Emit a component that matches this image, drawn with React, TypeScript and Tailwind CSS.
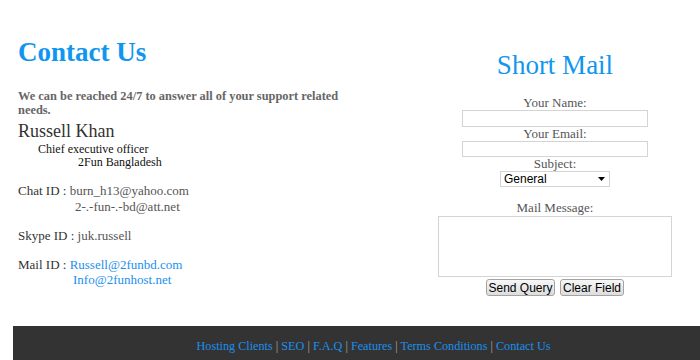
const serif = { fontFamily: '"Liberation Serif", "Times New Roman", serif' };
const sans = { fontFamily: '"Liberation Sans", Arial, sans-serif' };

const footerLinks = ['Hosting Clients', 'SEO', 'F.A.Q', 'Features', 'Terms Conditions', 'Contact Us'];

function ContactInfo() {
  return (
    <div className="w-[330px] shrink-0 pt-[36px]">
      <h1 className="text-[27px] font-bold leading-[32px] text-[#1196f0]">Contact Us</h1>
      <p className="mt-[21px] text-[12.4px] font-bold leading-[14px] text-[#666666]">
        We can be reached 24/7 to answer all of your support related needs.
      </p>
      <div className="mt-[4px] text-[18px] leading-[21px] text-[#333333]">Russell Khan</div>
      <div className="pl-[20px] text-[12px] leading-[14px] text-[#111111]">Chief executive officer</div>
      <div className="pl-[60px] text-[12px] leading-[13px] text-[#111111]">2Fun Bangladesh</div>

      <div className="mt-[14px] text-[13px] leading-[16px] text-[#333333]">
        Chat ID : <span className="text-[#555555]">burn_h13@yahoo.com</span>
      </div>
      <div className="pl-[57px] text-[13px] leading-[16px] text-[#555555]">2-.-fun-.-bd@att.net</div>

      <div className="mt-[13px] text-[13px] leading-[16px] text-[#333333]">
        Skype ID : <span className="text-[#555555]">juk.russell</span>
      </div>

      <div className="mt-[13px] text-[13px] leading-[16px] text-[#333333]">
        Mail ID : <span className="text-[#1a90ee]">Russell@2funbd.com</span>
      </div>
      <div className="pl-[55px] text-[13px] leading-[14px] text-[#1a90ee]">Info@2funhost.net</div>
    </div>
  );
}

function ShortMail() {
  const label = 'text-[13px] leading-[14px] text-[#555555]';
  const btn =
    'h-[17px] whitespace-nowrap rounded-[3px] border border-[#a3a3a3] bg-gradient-to-b from-[#f7f7f7] to-[#dddddd] px-0 text-[12px] leading-[14px] text-black';
  return (
    <div className="flex flex-1 flex-col items-center pt-[49px]">
      <h2 className="text-[27px] leading-[32px] text-[#1196f0]">Short Mail</h2>
      <div className="mt-[14px] text-[13px] leading-[15px] text-[#555555]">Your Name:</div>
      <div className="h-[17px] w-[186px] border border-[#d4d4d4] bg-white" />
      <div className={label}>Your Email:</div>
      <div className="h-[16px] w-[186px] border border-[#d4d4d4] bg-white" />
      <div className={label}>Subject:</div>
      <div
        className="flex h-[16px] w-[110px] items-center justify-between border border-[#d4d4d4] bg-white pl-[3px] pr-[4px] text-[12px] text-black"
        style={sans}
      >
        <span>General</span>
        <svg width="7" height="4" viewBox="0 0 7 4">
          <path d="M0 0h7L3.5 4z" fill="#000" />
        </svg>
      </div>
      <div className={`mt-[14px] ${label}`}>Mail Message:</div>
      <div className="mt-[1px] h-[61px] w-[234px] border border-[#d4d4d4] bg-white" />
      <div className="mt-[2px] flex gap-[5px]" style={sans}>
        <button className={`${btn} w-[69px]`}>Send Query</button>
        <button className={`${btn} w-[64px]`}>Clear Field</button>
      </div>
    </div>
  );
}

export default function App() {
  return (
    <div className="h-[360px] w-[700px] overflow-hidden bg-white" style={serif}>
      <div className="flex h-[326px] pl-[18px]">
        <ContactInfo />
        <div className="w-[62px] shrink-0" />
        <ShortMail />
      </div>
      <footer className="ml-[13px] h-[34px] bg-[#333333] pl-[34px] pt-[13px] text-center text-[12.2px] leading-[15px]">
        {footerLinks.map((link, i) => (
          <span key={link}>
            {i > 0 && <span className="text-[#aaaaaa]">{' | '}</span>}
            <span className="text-[#1a90ee]">{link}</span>
          </span>
        ))}
      </footer>
    </div>
  );
}
